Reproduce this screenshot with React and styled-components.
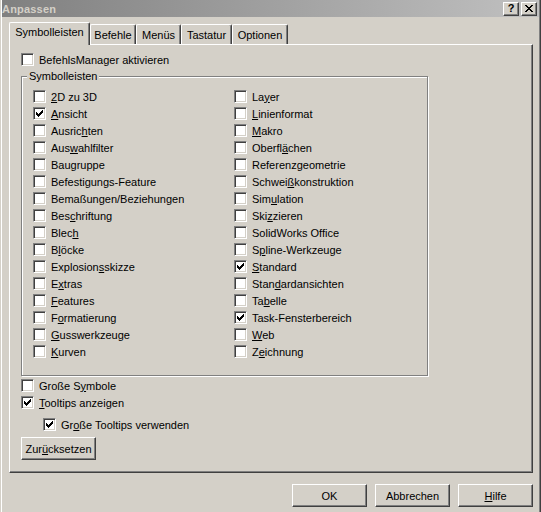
import React from 'react'
import styled, { createGlobalStyle } from 'styled-components'

const Global = createGlobalStyle`
  html, body { margin: 0; padding: 0; background: #d4d0c8; }
  body { font-family: "Liberation Sans", Arial, sans-serif; font-size: 11px; color: #000; }
  * { box-sizing: border-box; }
`

const Window = styled.div`
  width: 541px;
  height: 512px;
  background: #d4d0c8;
  border-left: 1px solid #d4d0c8;
  border-right: 1px solid #404040;
  box-shadow: inset 1px 0 0 #fff, inset -1px 0 0 #808080;
  padding: 0 1px 0 1px;
  display: flex;
  flex-direction: column;
  overflow: hidden;
`

const TitleBar = styled.div`
  height: 17px;
  background: linear-gradient(to right, #808080, #c0c0c0);
  display: flex;
  align-items: center;
  justify-content: space-between;
  padding: 0 2px 0 0;
`

const TitleText = styled.span`
  color: #d4d0c8;
  font-weight: bold;
  font-size: 11px;
  letter-spacing: 0.2px;
`

const TitleButtons = styled.div`
  display: flex;
  gap: 2px;
`

const TitleButton = styled.div`
  width: 16px;
  height: 14px;
  background: #d4d0c8;
  border-top: 1px solid #fff;
  border-left: 1px solid #fff;
  border-right: 1px solid #404040;
  border-bottom: 1px solid #404040;
  box-shadow: inset -1px -1px 0 #808080;
  display: flex;
  align-items: center;
  justify-content: center;
  font-weight: bold;
  font-size: 11px;
  line-height: 1;
`

const Body = styled.div`
  flex: 1;
  padding: 5px 5px 0 7px;
  display: flex;
  flex-direction: column;
`

const TabBar = styled.div`
  display: flex;
  align-items: flex-end;
  height: 23px;
  position: relative;
  z-index: 1;
  margin-bottom: -1px;
`

const Tab = styled.div`
  width: ${p => p.$w}px;
  height: ${p => (p.$active ? '23px' : '20px')};
  background: #d4d0c8;
  border-top: 1px solid #fff;
  border-left: 1px solid #fff;
  border-right: 1px solid #404040;
  box-shadow: inset -1px 0 0 #808080;
  border-radius: 2px 2px 0 0;
  display: flex;
  justify-content: center;
  align-items: ${p => (p.$active ? 'flex-start' : 'center')};
  padding-top: ${p => (p.$active ? '3px' : '0')};
  white-space: nowrap;
  margin-bottom: ${p => (p.$active ? '0' : '1px')};
`

const Panel = styled.div`
  width: 524px;
  height: 429px;
  border-top: 1px solid #fff;
  border-left: 1px solid #fff;
  border-right: 1px solid #404040;
  border-bottom: 1px solid #404040;
  box-shadow: inset -1px -1px 0 #808080;
  padding: 6px 11px 0 11px;
  display: flex;
  flex-direction: column;
  align-items: flex-start;
`

const Row = styled.div`
  height: 17px;
  display: flex;
  align-items: center;
  gap: 5px;
  margin-left: ${p => p.$indent || 0}px;
  margin-top: ${p => p.$top || 0}px;
  white-space: nowrap;
`

const Box = styled.div`
  width: 13px;
  height: 13px;
  flex: none;
  background: #fff;
  border-top: 1px solid #808080;
  border-left: 1px solid #808080;
  border-right: 1px solid #fff;
  border-bottom: 1px solid #fff;
  box-shadow: inset 1px 1px 0 #404040, inset -1px -1px 0 #d4d0c8;
  display: flex;
  align-items: center;
  justify-content: center;
`

const Group = styled.div`
  position: relative;
  width: 407px;
  height: 300px;
  margin-top: 8px;
  border: 1px solid #808080;
  box-shadow: inset 1px 1px 0 #fff, 1px 1px 0 #fff;
  padding: 11px 0 0 11px;
`

const GroupLabel = styled.span`
  position: absolute;
  top: -7px;
  left: 5px;
  padding: 0 2px;
  background: #d4d0c8;
  line-height: 13px;
`

const Columns = styled.div`
  display: grid;
  grid-template-columns: 201px 180px;
  grid-template-rows: repeat(16, 17px);
  grid-auto-flow: column;
`

const Button = styled.button`
  width: 75px;
  height: 23px;
  padding: 0;
  font: inherit;
  color: #000;
  background: #d4d0c8;
  border-top: 1px solid #fff;
  border-left: 1px solid #fff;
  border-right: 1px solid #404040;
  border-bottom: 1px solid #404040;
  box-shadow: inset -1px -1px 0 #808080;
  margin-top: ${p => p.$top || 0}px;
  display: flex;
  align-items: center;
  justify-content: center;
`

const Footer = styled.div`
  display: flex;
  justify-content: flex-end;
  gap: 8px;
  margin-top: 11px;
  padding-right: 1px;
`

const Label = ({ text }) => {
  const i = text.indexOf('&')
  if (i < 0) return <span>{text}</span>
  return (
    <span>
      {text.slice(0, i)}
      <u>{text[i + 1]}</u>
      {text.slice(i + 2)}
    </span>
  )
}

const checkPath = [2, 3, 4, 3, 2, 1, 0].map((y, x) => `M${x} ${y}h1v3h-1z`).join('')

const Check = ({ on }) => (
  <Box>
    {on && (
      <svg width="7" height="7" viewBox="0 0 7 7" shapeRendering="crispEdges">
        <path d={checkPath} fill="#000" />
      </svg>
    )}
  </Box>
)

const CheckRow = ({ label, on, indent, top }) => (
  <Row $indent={indent} $top={top}>
    <Check on={on} />
    <Label text={label} />
  </Row>
)

const bars = [
  ['&2D zu 3D'], ['&Ansicht', true], ['Ausric&hten'], ['Aus&wahlfilter'],
  ['Bau&gruppe'], ['Befestigungs-Feature'], ['Bemaßungen/Beziehungen'], ['Bes&chriftung'],
  ['Blec&h'], ['B&löcke'], ['Explosion&sskizze'], ['E&xtras'],
  ['&Features'], ['F&ormatierung'], ['&Gusswerkzeuge'], ['&Kurven'],
  ['La&yer'], ['&Linienformat'], ['&Makro'], ['Oberfl&ächen'],
  ['Referenz&geometrie'], ['Schwei&ßkonstruktion'], ['Sim&ulation'], ['Ski&zzieren'],
  ['SolidWorks Office'], ['S&pline-Werkzeuge'], ['&Standard', true], ['Stan&dardansichten'],
  ['Ta&belle'], ['Task-Fensterbereich', true], ['&Web'], ['Z&eichnung'],
]

const tabs = [
  ['Symbolleisten', 81],
  ['Befehle', 46],
  ['Menüs', 45],
  ['Tastatur', 51],
  ['Optionen', 56],
]

const CloseIcon = () => (
  <svg width="8" height="7" viewBox="0 0 8 7" shapeRendering="crispEdges">
    <path d="M0 0h2v1h-2zM6 0h2v1h-2zM1 1h2v1h-2zM5 1h2v1h-2zM2 2h4v1h-4zM3 3h2v1h-2zM2 4h4v1h-4zM1 5h2v1h-2zM5 5h2v1h-2zM0 6h2v1h-2zM6 6h2v1h-2z" fill="#000" />
  </svg>
)

export default function App() {
  return (
    <>
      <Global />
      <Window>
        <TitleBar>
          <TitleText>Anpassen</TitleText>
          <TitleButtons>
            <TitleButton>?</TitleButton>
            <TitleButton><CloseIcon /></TitleButton>
          </TitleButtons>
        </TitleBar>
        <Body>
          <TabBar>
            {tabs.map(([t, w], i) => (
              <Tab key={t} $w={w} $active={i === 0}>{t}</Tab>
            ))}
          </TabBar>
          <Panel>
            <CheckRow label="BefehlsManager aktivieren" />
            <Group>
              <GroupLabel>Symbolleisten</GroupLabel>
              <Columns>
                {bars.map(([l, on]) => (
                  <CheckRow key={l} label={l} on={on} />
                ))}
              </Columns>
            </Group>
            <CheckRow label="Große S&ymbole" top={1} />
            <CheckRow label="&Tooltips anzeigen" on />
            <CheckRow label="Gr&oße Tooltips verwenden" on indent={22} top={5} />
            <Button $top={4}><Label text="Zur&ücksetzen" /></Button>
          </Panel>
          <Footer>
            <Button>OK</Button>
            <Button>Abbrechen</Button>
            <Button><Label text="&Hilfe" /></Button>
          </Footer>
        </Body>
      </Window>
    </>
  )
}
